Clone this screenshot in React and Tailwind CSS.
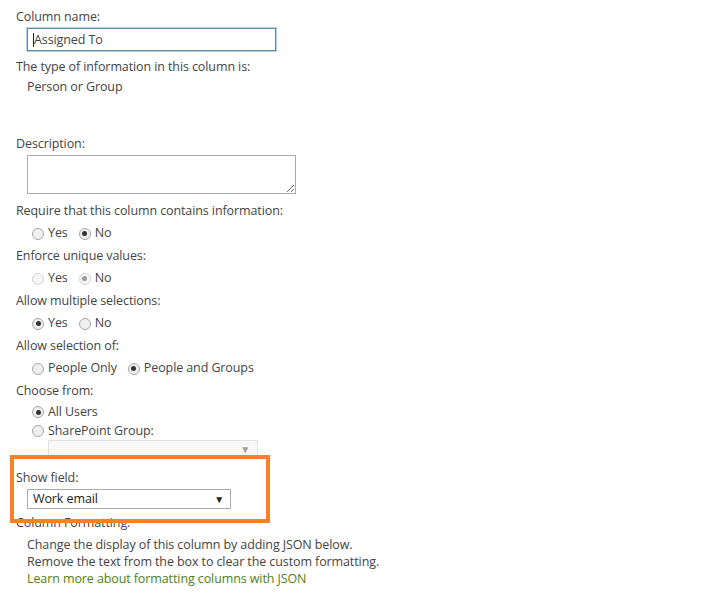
import React from "react";

function Radio({ checked, disabled, label }) {
  return (
    <span className="inline-flex items-center mr-[6px]">
      <span
        className={
          "ml-[5px] mr-[4px] w-[12px] h-[12px] rounded-full border flex items-center justify-center " +
          (disabled ? "border-[#d6d6d6] bg-[#f6f6f6]" : "border-[#a6a6a6] bg-[#f0f0f0]")
        }
      >
        {checked && (
          <span className={"w-[5px] h-[5px] rounded-full " + (disabled ? "bg-[#9a9a9a]" : "bg-[#333]")} />
        )}
      </span>
      <span>{label}</span>
    </span>
  );
}

export default function App() {
  return (
    <div
      className="relative w-[716px] h-[599px] bg-white text-[#444] text-[12.5px] tracking-[-0.1px]"
      style={{ fontFamily: '"Open Sans", "Noto Sans", sans-serif' }}
    >
      <div className="pl-[16px] pt-[8px]">
        <div className="h-[18px] leading-[18px]">Column name:</div>
        <div className="ml-[11px] mt-[2px] w-[249px] h-[23px] border border-[#5e8d90] shadow-[0_0_0_1px_#b0d3f3] flex items-center pl-[5px]">
          <span className="w-px h-[14px] bg-[#222]" />
          <span className="leading-[18px]">Assigned To</span>
        </div>
        <div className="mt-[7px] h-[18px] leading-[18px]">The type of information in this column is:</div>
        <div className="ml-[11px] mt-[2px] h-[18px] leading-[18px]">Person or Group</div>

        <div className="mt-[39px] h-[18px] leading-[18px]">Description:</div>
        <textarea className="block ml-[11px] mt-[2px] w-[269px] h-[39px] border border-[#ababab] bg-white" />

        <div className="mt-[6px] h-[22px] leading-[22px]">Require that this column contains information:</div>
        <div className="ml-[11px] h-[23px] flex items-center">
          <Radio label="Yes" />
          <Radio label="No" checked />
        </div>

        <div className="h-[22px] leading-[22px]">Enforce unique values:</div>
        <div className="ml-[11px] h-[23px] flex items-center">
          <Radio label="Yes" disabled />
          <Radio label="No" checked disabled />
        </div>

        <div className="h-[22px] leading-[22px]">Allow multiple selections:</div>
        <div className="ml-[11px] h-[23px] flex items-center">
          <Radio label="Yes" checked />
          <Radio label="No" />
        </div>

        <div className="h-[22px] leading-[22px]">Allow selection of:</div>
        <div className="ml-[11px] h-[23px] flex items-center">
          <Radio label="People Only" />
          <Radio label="People and Groups" checked />
        </div>

        <div className="h-[22px] leading-[22px]">Choose from:</div>
        <div className="ml-[11px] h-[20px] flex items-center">
          <Radio label="All Users" checked />
        </div>
        <div className="ml-[11px] h-[18px] flex items-center">
          <Radio label="SharePoint Group:" />
        </div>
        <div className="ml-[32px] w-[210px] h-[18px] border border-[#e3e3e3] bg-[#f8f8f8] flex items-center justify-end pr-[7px]">
          <span className="text-[#a0a0a0] text-[10px] leading-none">▼</span>
        </div>

        <div className="mt-[11px] h-[18px] leading-[18px]">Show field:</div>
        <div className="ml-[11px] mt-[2px] w-[204px] h-[20px] border border-[#ababab] flex items-center justify-between pl-[5px] pr-[6px]">
          <span className="text-[#222] leading-[18px]">Work email</span>
          <span className="text-[#222] text-[10px] leading-none">▼</span>
        </div>

        <div className="mt-[5px] h-[18px] leading-[18px]">Column Formatting:</div>
        <div className="ml-[11px] mt-[4px] leading-[17px]">
          <div>Change the display of this column by adding JSON below.</div>
          <div>Remove the text from the box to clear the custom formatting.</div>
          <div className="text-[#4f8117]">Learn more about formatting columns with JSON</div>
        </div>
      </div>

      <div className="absolute left-[10px] top-[455px] w-[260px] h-[68px] border-[4px] border-[#f7802a] pointer-events-none" />
    </div>
  );
}
